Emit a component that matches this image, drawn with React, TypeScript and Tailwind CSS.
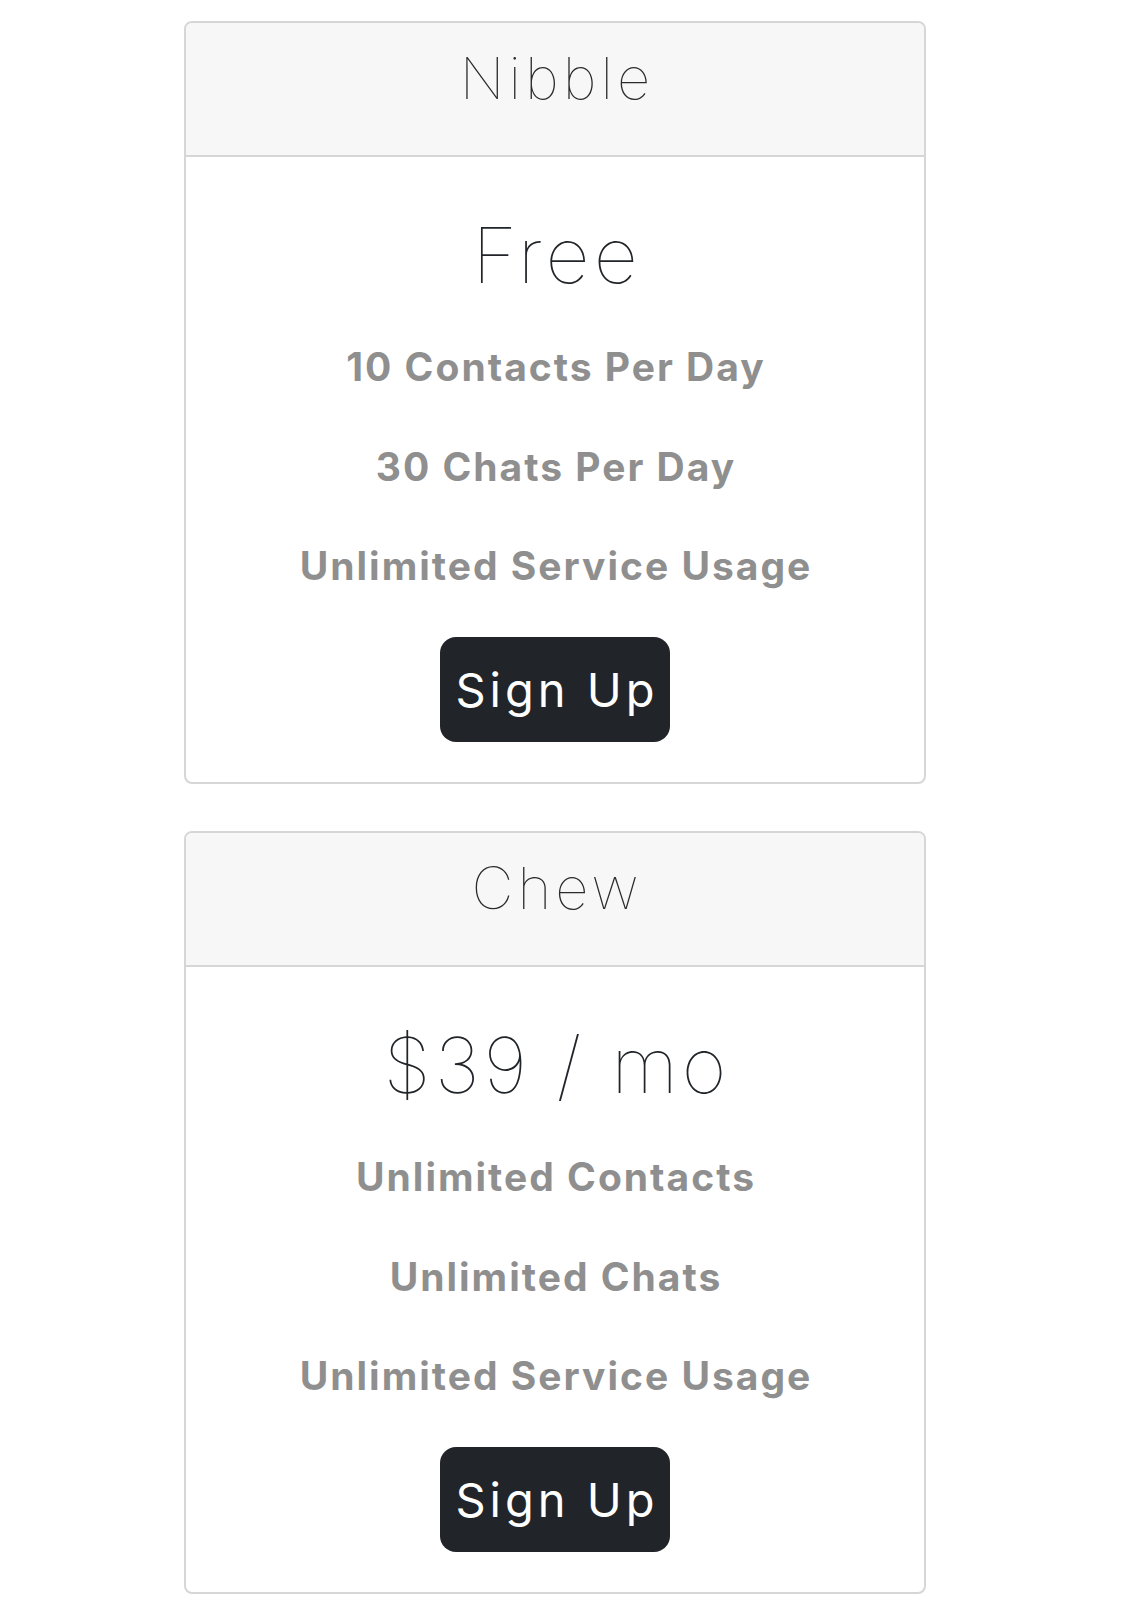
const plans = [
  {
    name: 'Nibble',
    price: 'Free',
    features: ['10 Contacts Per Day', '30 Chats Per Day', 'Unlimited Service Usage'],
  },
  {
    name: 'Chew',
    price: '$39 / mo',
    features: ['Unlimited Contacts', 'Unlimited Chats', 'Unlimited Service Usage'],
  },
]

function PlanCard({ name, price, features }: { name: string; price: string; features: string[] }) {
  return (
    <div className="mb-[47px] w-[742px] overflow-hidden rounded-[8px] border-2 border-[#d6d6d6] bg-white">
      <div className="h-[134px] border-b-2 border-[#d6d6d6] bg-[#f7f7f7] pt-[26px] text-center">
        <h4 className="pl-[4px] text-[58px] leading-none font-thin tracking-[4px] text-[#2b2b2b]">{name}</h4>
      </div>
      <div className="flex flex-col items-center pt-[60px] pb-[40px] text-center">
        <h1 className="pl-[4px] text-[77px] leading-none font-thin tracking-[4px] text-[#212529]">{price}</h1>
        <h3 className="mt-[53px] pl-[2px] text-[39px] leading-none font-bold tracking-[2px] text-[#8f8f8f]">{features[0]}</h3>
        <h3 className="mt-[61px] pl-[2px] text-[39px] leading-none font-bold tracking-[2px] text-[#8f8f8f]">{features[1]}</h3>
        <h3 className="mt-[60px] pl-[2px] text-[39px] leading-none font-bold tracking-[2px] text-[#8f8f8f]">{features[2]}</h3>
        <button className="mt-[52px] flex h-[105px] w-[230px] items-center justify-center rounded-2xl bg-[#212529] pl-[4px] text-[47px] leading-none tracking-[4px] text-white">
          Sign Up
        </button>
      </div>
    </div>
  )
}

export default function App() {
  return (
    <div className="min-h-[1620px] bg-white pt-[21px] pl-[184px] font-[family-name:Inter,sans-serif]">
      {plans.map((p) => (
        <PlanCard key={p.name} {...p} />
      ))}
    </div>
  )
}
